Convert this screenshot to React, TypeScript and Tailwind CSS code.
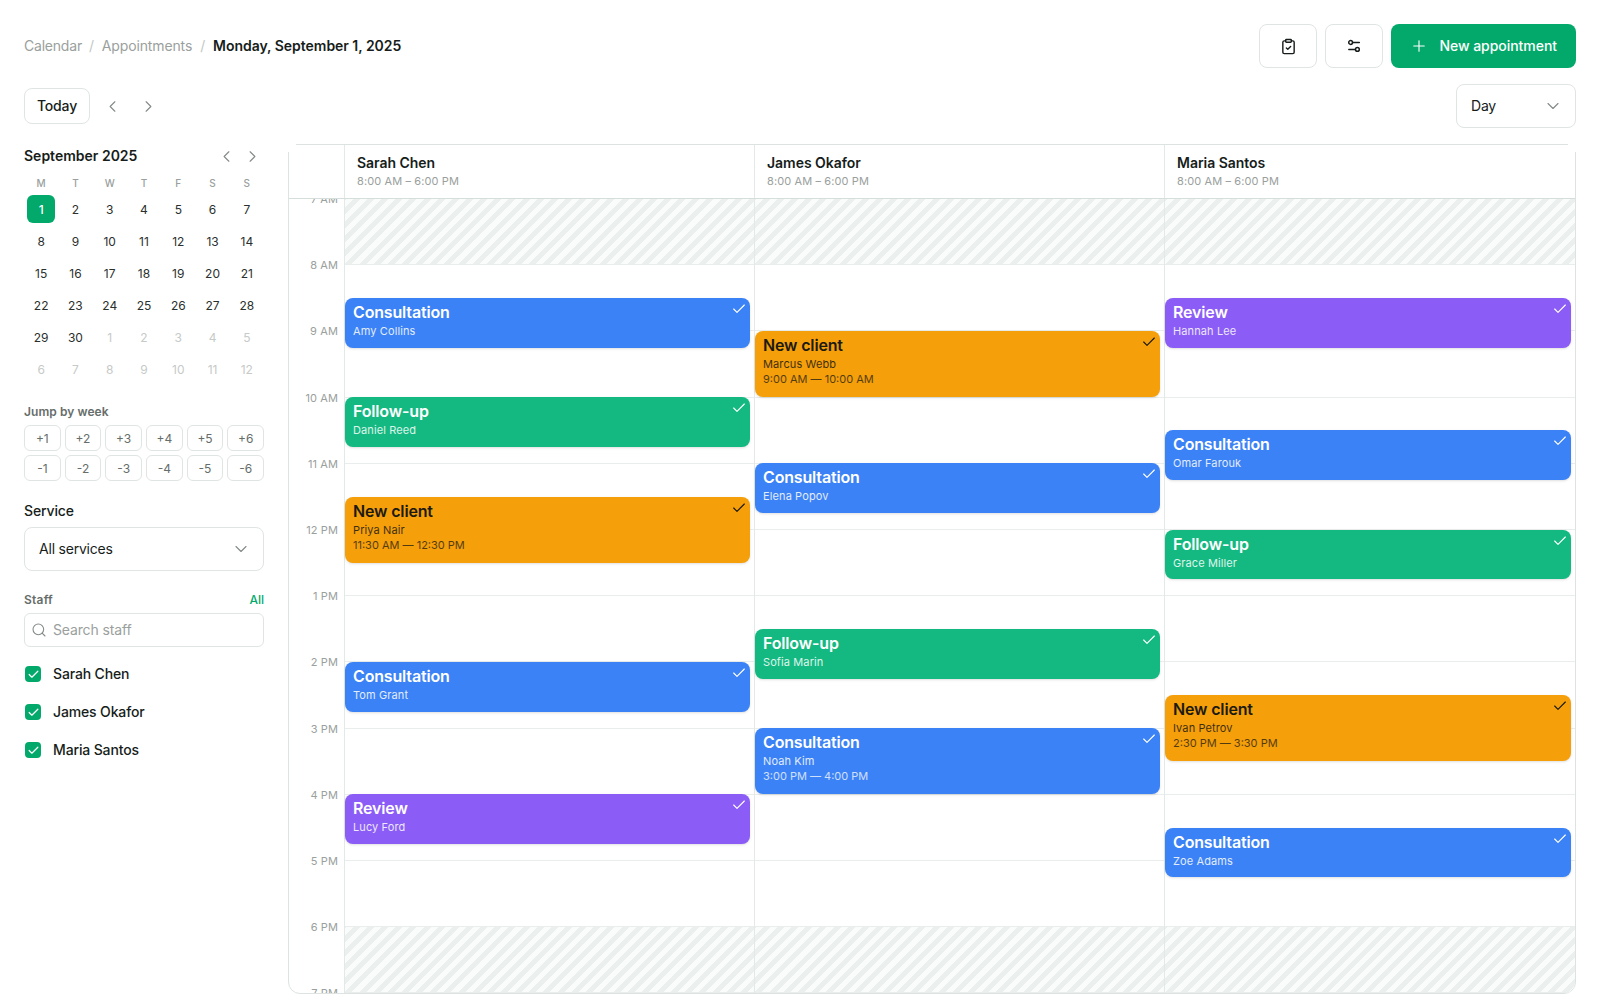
import React, { useState } from 'react';
import { Check, ChevronDown, ChevronLeft, ChevronRight, ClipboardCheck, Plus, Search } from 'lucide-react';
import clsx from 'clsx';

type Kind = 'Consultation' | 'Follow-up' | 'New client' | 'Review';

interface Appointment {
  kind: Kind;
  client: string;
  start: number;
  end: number;
  time?: string;
}

interface StaffMember {
  name: string;
  appointments: Appointment[];
}

const DAY_START = 7;
const HOUR_HEIGHT = 66.2;

const KIND_STYLES: Record<Kind, string> = {
  Consultation: 'bg-[#3b82f6] text-white',
  'Follow-up': 'bg-[#13b981] text-white',
  'New client': 'bg-[#f59f0b] text-[#1c1a10]',
  Review: 'bg-[#8b5cf6] text-white',
};

const STAFF: StaffMember[] = [
  {
    name: 'Sarah Chen',
    appointments: [
      { kind: 'Consultation', client: 'Amy Collins', start: 8.5, end: 9.25 },
      { kind: 'Follow-up', client: 'Daniel Reed', start: 10, end: 10.75 },
      { kind: 'New client', client: 'Priya Nair', start: 11.5, end: 12.5, time: '11:30 AM — 12:30 PM' },
      { kind: 'Consultation', client: 'Tom Grant', start: 14, end: 14.75 },
      { kind: 'Review', client: 'Lucy Ford', start: 16, end: 16.75 },
    ],
  },
  {
    name: 'James Okafor',
    appointments: [
      { kind: 'New client', client: 'Marcus Webb', start: 9, end: 10, time: '9:00 AM — 10:00 AM' },
      { kind: 'Consultation', client: 'Elena Popov', start: 11, end: 11.75 },
      { kind: 'Follow-up', client: 'Sofia Marin', start: 13.5, end: 14.25 },
      { kind: 'Consultation', client: 'Noah Kim', start: 15, end: 16, time: '3:00 PM — 4:00 PM' },
    ],
  },
  {
    name: 'Maria Santos',
    appointments: [
      { kind: 'Review', client: 'Hannah Lee', start: 8.5, end: 9.25 },
      { kind: 'Consultation', client: 'Omar Farouk', start: 10.5, end: 11.25 },
      { kind: 'Follow-up', client: 'Grace Miller', start: 12, end: 12.75 },
      { kind: 'New client', client: 'Ivan Petrov', start: 14.5, end: 15.5, time: '2:30 PM — 3:30 PM' },
      { kind: 'Consultation', client: 'Zoe Adams', start: 16.5, end: 17.25 },
    ],
  },
];

const HOURS = ['7 AM', '8 AM', '9 AM', '10 AM', '11 AM', '12 PM', '1 PM', '2 PM', '3 PM', '4 PM', '5 PM', '6 PM'];
const WEEKDAYS = ['M', 'T', 'W', 'T', 'F', 'S', 'S'];
const JUMPS = ['+1', '+2', '+3', '+4', '+5', '+6', '-1', '-2', '-3', '-4', '-5', '-6'];

// 42 cells, September followed by the first days of October
const DAYS = Array.from({ length: 42 }, (_, i) => ({
  day: i < 30 ? i + 1 : i - 29,
  current: i < 30,
}));

const FiltersIcon = () => (
  <svg width="16" height="16" viewBox="0 0 16 16" fill="none" stroke="currentColor" strokeWidth="1.5" strokeLinecap="round">
    <circle cx="4.6" cy="4.5" r="1.9" />
    <path d="M6.8 4.5h6.5" />
    <circle cx="11.4" cy="11.4" r="1.9" />
    <path d="M2.8 11.4h6.4" />
  </svg>
);

const TopBar = () => (
  <header className="flex h-11 items-center justify-between">
    <nav className="flex items-center gap-2 text-sm tracking-[-0.01em] text-[#9aa09d]">
      <span className="tracking-[-0.015em]">Calendar</span>
      <span className="-ml-px text-[#c3c8c6]">/</span>
      <span>Appointments</span>
      <span className="text-[#c3c8c6]">/</span>
      <span className="font-semibold tracking-[-0.002em] text-[#161d1a]">Monday, September 1, 2025</span>
    </nav>
    <div className="flex gap-2">
      <button aria-label="Tasks" className="flex h-11 w-[58px] items-center justify-center rounded-lg border border-[#dfe5e2]">
        <ClipboardCheck className="size-[17px]" />
      </button>
      <button aria-label="Filters" className="flex h-11 w-[58px] items-center justify-center rounded-lg border border-[#dfe5e2]">
        <FiltersIcon />
      </button>
      <button className="flex h-11 w-[185px] items-center justify-end gap-[11px] rounded-lg bg-[#03a96b] pr-[19px] text-sm font-medium tracking-[-0.003em] text-white">
        <Plus className="size-[18px]" strokeWidth={1.5} />
        New appointment
      </button>
    </div>
  </header>
);

const Toolbar = () => (
  <div className="mt-4 flex h-11 items-center justify-between">
    <div className="flex items-center">
      <button className="h-9 w-[66px] rounded-lg border border-[#dfe5e2] text-sm font-medium tracking-[-0.01em]">Today</button>
      <button aria-label="Previous day" className="ml-1 flex size-9 items-center justify-center text-[#838a87]">
        <ChevronLeft className="size-[19px]" strokeWidth={1.4} />
      </button>
      <button aria-label="Next day" className="flex size-9 items-center justify-center text-[#838a87]">
        <ChevronRight className="size-[19px]" strokeWidth={1.4} />
      </button>
    </div>
    <button className="flex h-11 w-[120px] items-center justify-between rounded-lg border border-[#dfe5e2] pr-3 pl-3.5 text-sm tracking-[-0.015em]">
      Day
      <ChevronDown className="size-5 text-[#838a87]" strokeWidth={1.35} />
    </button>
  </div>
);

const MiniCalendar = () => (
  <section>
    <div className="flex h-6 items-center justify-between">
      <h2 className="text-sm font-semibold">September 2025</h2>
      <div className="flex gap-0.5 text-[#838a87]">
        <button aria-label="Previous month" className="flex size-6 items-center justify-center">
          <ChevronLeft className="size-[19px]" strokeWidth={1.4} />
        </button>
        <button aria-label="Next month" className="flex size-6 items-center justify-center">
          <ChevronRight className="size-[19px]" strokeWidth={1.4} />
        </button>
      </div>
    </div>
    <div className="mt-2 grid grid-cols-7 text-center text-[10px] leading-[15px] font-medium text-[#9aa09d]">
      {WEEKDAYS.map((d, i) => (
        <span key={i}>{d}</span>
      ))}
    </div>
    <div className="mt-0.5 grid grid-cols-7">
      {DAYS.map(({ day, current }, i) => (
        <div key={i} className="flex h-8 items-center justify-center">
          <span
            className={clsx(
              'flex size-7 items-center justify-center rounded-md pt-0.5 text-xs',
              i === 0 && 'bg-[#03a96b] font-medium text-white',
              i > 0 && current && 'text-[#2a302d]',
              !current && 'text-[#c6cac8]'
            )}
          >
            {day}
          </span>
        </div>
      ))}
    </div>
  </section>
);

interface StaffFilterProps {
  selected: string[];
  onToggle: (name: string) => void;
  onAll: () => void;
}

const StaffFilter: React.FC<StaffFilterProps> = ({ selected, onToggle, onAll }) => (
  <section className="mt-[21px]">
    <div className="flex h-4 items-center justify-between text-xs font-medium">
      <h3 className="font-semibold tracking-[0.02em] text-[#666d6a]">Staff</h3>
      <button className="text-[#03a96b]" onClick={onAll}>All</button>
    </div>
    <label className="mt-[5px] flex h-[34px] items-center gap-1.5 rounded-md border border-[#dfe5e2] px-1.5">
      <Search className="size-4 shrink-0 text-[#838a87]" strokeWidth={1.6} />
      <input
        className="w-full bg-transparent text-sm tracking-[-0.01em] outline-none placeholder:text-[#9aa09d]"
        placeholder="Search staff"
      />
    </label>
    <div className="mt-2 flex flex-col">
      {STAFF.map(({ name }) => (
        <button key={name} className="flex h-[38px] items-center gap-3 pl-px text-sm font-medium tracking-[-0.01em]" onClick={() => onToggle(name)}>
          <span
            className={clsx(
              'flex size-4 items-center justify-center rounded',
              selected.includes(name) ? 'bg-[#03a96b] text-white' : 'border border-[#dfe5e2]'
            )}
          >
            {selected.includes(name) && <Check className="size-[13px]" strokeWidth={2.25} />}
          </span>
          {name}
        </button>
      ))}
    </div>
  </section>
);

const AppointmentCard = ({ appointment }: { appointment: Appointment }) => {
  const { kind, client, start, end, time } = appointment;
  return (
    <div
      className={clsx('absolute right-1 left-0 overflow-hidden rounded-lg px-2 pt-1 shadow-sm', KIND_STYLES[kind])}
      style={{ top: (start - DAY_START) * HOUR_HEIGHT - 0.35, height: (end - start) * HOUR_HEIGHT }}
    >
      <div className="text-base leading-5 font-semibold tracking-[-0.01em]">{kind}</div>
      <div className="mt-px -mb-px text-[11px] leading-4 tracking-[0.01em] opacity-85">{client}</div>
      {time && <div className="text-[11px] leading-4 opacity-75">{time}</div>}
      <Check className="absolute top-[3px] right-[3px] size-4" strokeWidth={1.75} />
    </div>
  );
};

// Hatched block for the hours outside of the shift
const ClosedHours = ({ from, to }: { from: number; to: number }) => (
  <div
    className="absolute inset-x-0 bg-[repeating-linear-gradient(-45deg,#fafcfb_0px,#fafcfb_5px,#ebefed_5px,#ebefed_10px)]"
    style={{ top: (from - DAY_START) * HOUR_HEIGHT, height: (to - from) * HOUR_HEIGHT }}
  />
);

const DaySchedule = () => (
  <main className="relative flex h-[850px] flex-1 flex-col rounded-b-xl border border-[#dce3e0]">
    <div className="grid h-[54px] shrink-0 grid-cols-[55px_410px_410px_1fr] border-b border-[#d6dedb]">
      <div />
      {STAFF.map(({ name }) => (
        <div key={name} className="border-l border-[#e3e9e6] pt-2 pl-3">
          <div className="text-sm leading-5 font-semibold tracking-[-0.002em]">{name}</div>
          <div className="text-[11px] leading-4 tracking-[0.01em] text-[#9aa09d]">8:00 AM – 6:00 PM</div>
        </div>
      ))}
    </div>
    <div className="grid flex-1 grid-cols-[55px_410px_410px_1fr] overflow-hidden rounded-b-[11px]">
      <div className="pr-1.5 text-right text-[11px] tracking-[0.01em] text-[#9aa09d]">
        {[...HOURS, '7 PM'].map((hour) => (
          <div key={hour} className="-mt-2 mb-2 h-[66.2px] leading-4">
            {hour}
          </div>
        ))}
      </div>
      {STAFF.map(({ name, appointments }) => (
        <div key={name} className="relative border-l border-[#e3e9e6]">
          <ClosedHours from={7} to={8} />
          <ClosedHours from={18} to={19} />
          <div className="relative">
            {HOURS.map((hour) => (
              <div key={hour} className="h-[66.2px] border-b border-[#e9eeec]" />
            ))}
          </div>
          {appointments.map((appointment) => (
            <AppointmentCard key={appointment.client} appointment={appointment} />
          ))}
        </div>
      ))}
    </div>
    <span className="absolute -top-px -left-px size-2 bg-white" />
    <span className="absolute -top-px -right-px size-2 bg-white" />
  </main>
);

const App = () => {
  const [selected, setSelected] = useState(STAFF.map((s) => s.name));

  const handleToggle = (name: string) => {
    setSelected((prev) => (prev.includes(name) ? prev.filter((n) => n !== name) : [...prev, name]));
  };

  return (
    <div className="h-[1000px] w-[1600px] overflow-hidden bg-white px-6 pt-6 font-['Inter',sans-serif] text-[#161d1a]">
      <TopBar />
      <Toolbar />
      <div className="mt-4 flex gap-6">
        <aside className="w-60 shrink-0">
          <MiniCalendar />
          <section className="mt-[19px]">
            <h3 className="text-xs leading-4 font-semibold tracking-[0.005em] text-[#666d6a]">Jump by week</h3>
            <div className="mt-[5px] grid grid-cols-6 gap-1">
              {JUMPS.map((jump) => (
                <button key={jump} className="h-[26px] rounded-md border border-[#dfe5e2] pt-px text-xs text-[#666d6a]">
                  {jump}
                </button>
              ))}
            </div>
          </section>
          <section className="mt-5">
            <h3 className="text-sm leading-5 font-medium tracking-[-0.01em]">Service</h3>
            <button className="mt-1.5 flex h-11 w-full items-center justify-between rounded-lg border border-[#dfe5e2] pr-3 pl-3.5 text-sm tracking-[-0.015em]">
              All services
              <ChevronDown className="size-5 text-[#838a87]" strokeWidth={1.35} />
            </button>
          </section>
          <StaffFilter selected={selected} onToggle={handleToggle} onAll={() => setSelected(STAFF.map((s) => s.name))} />
        </aside>
        <DaySchedule />
      </div>
    </div>
  );
};

export default App;
